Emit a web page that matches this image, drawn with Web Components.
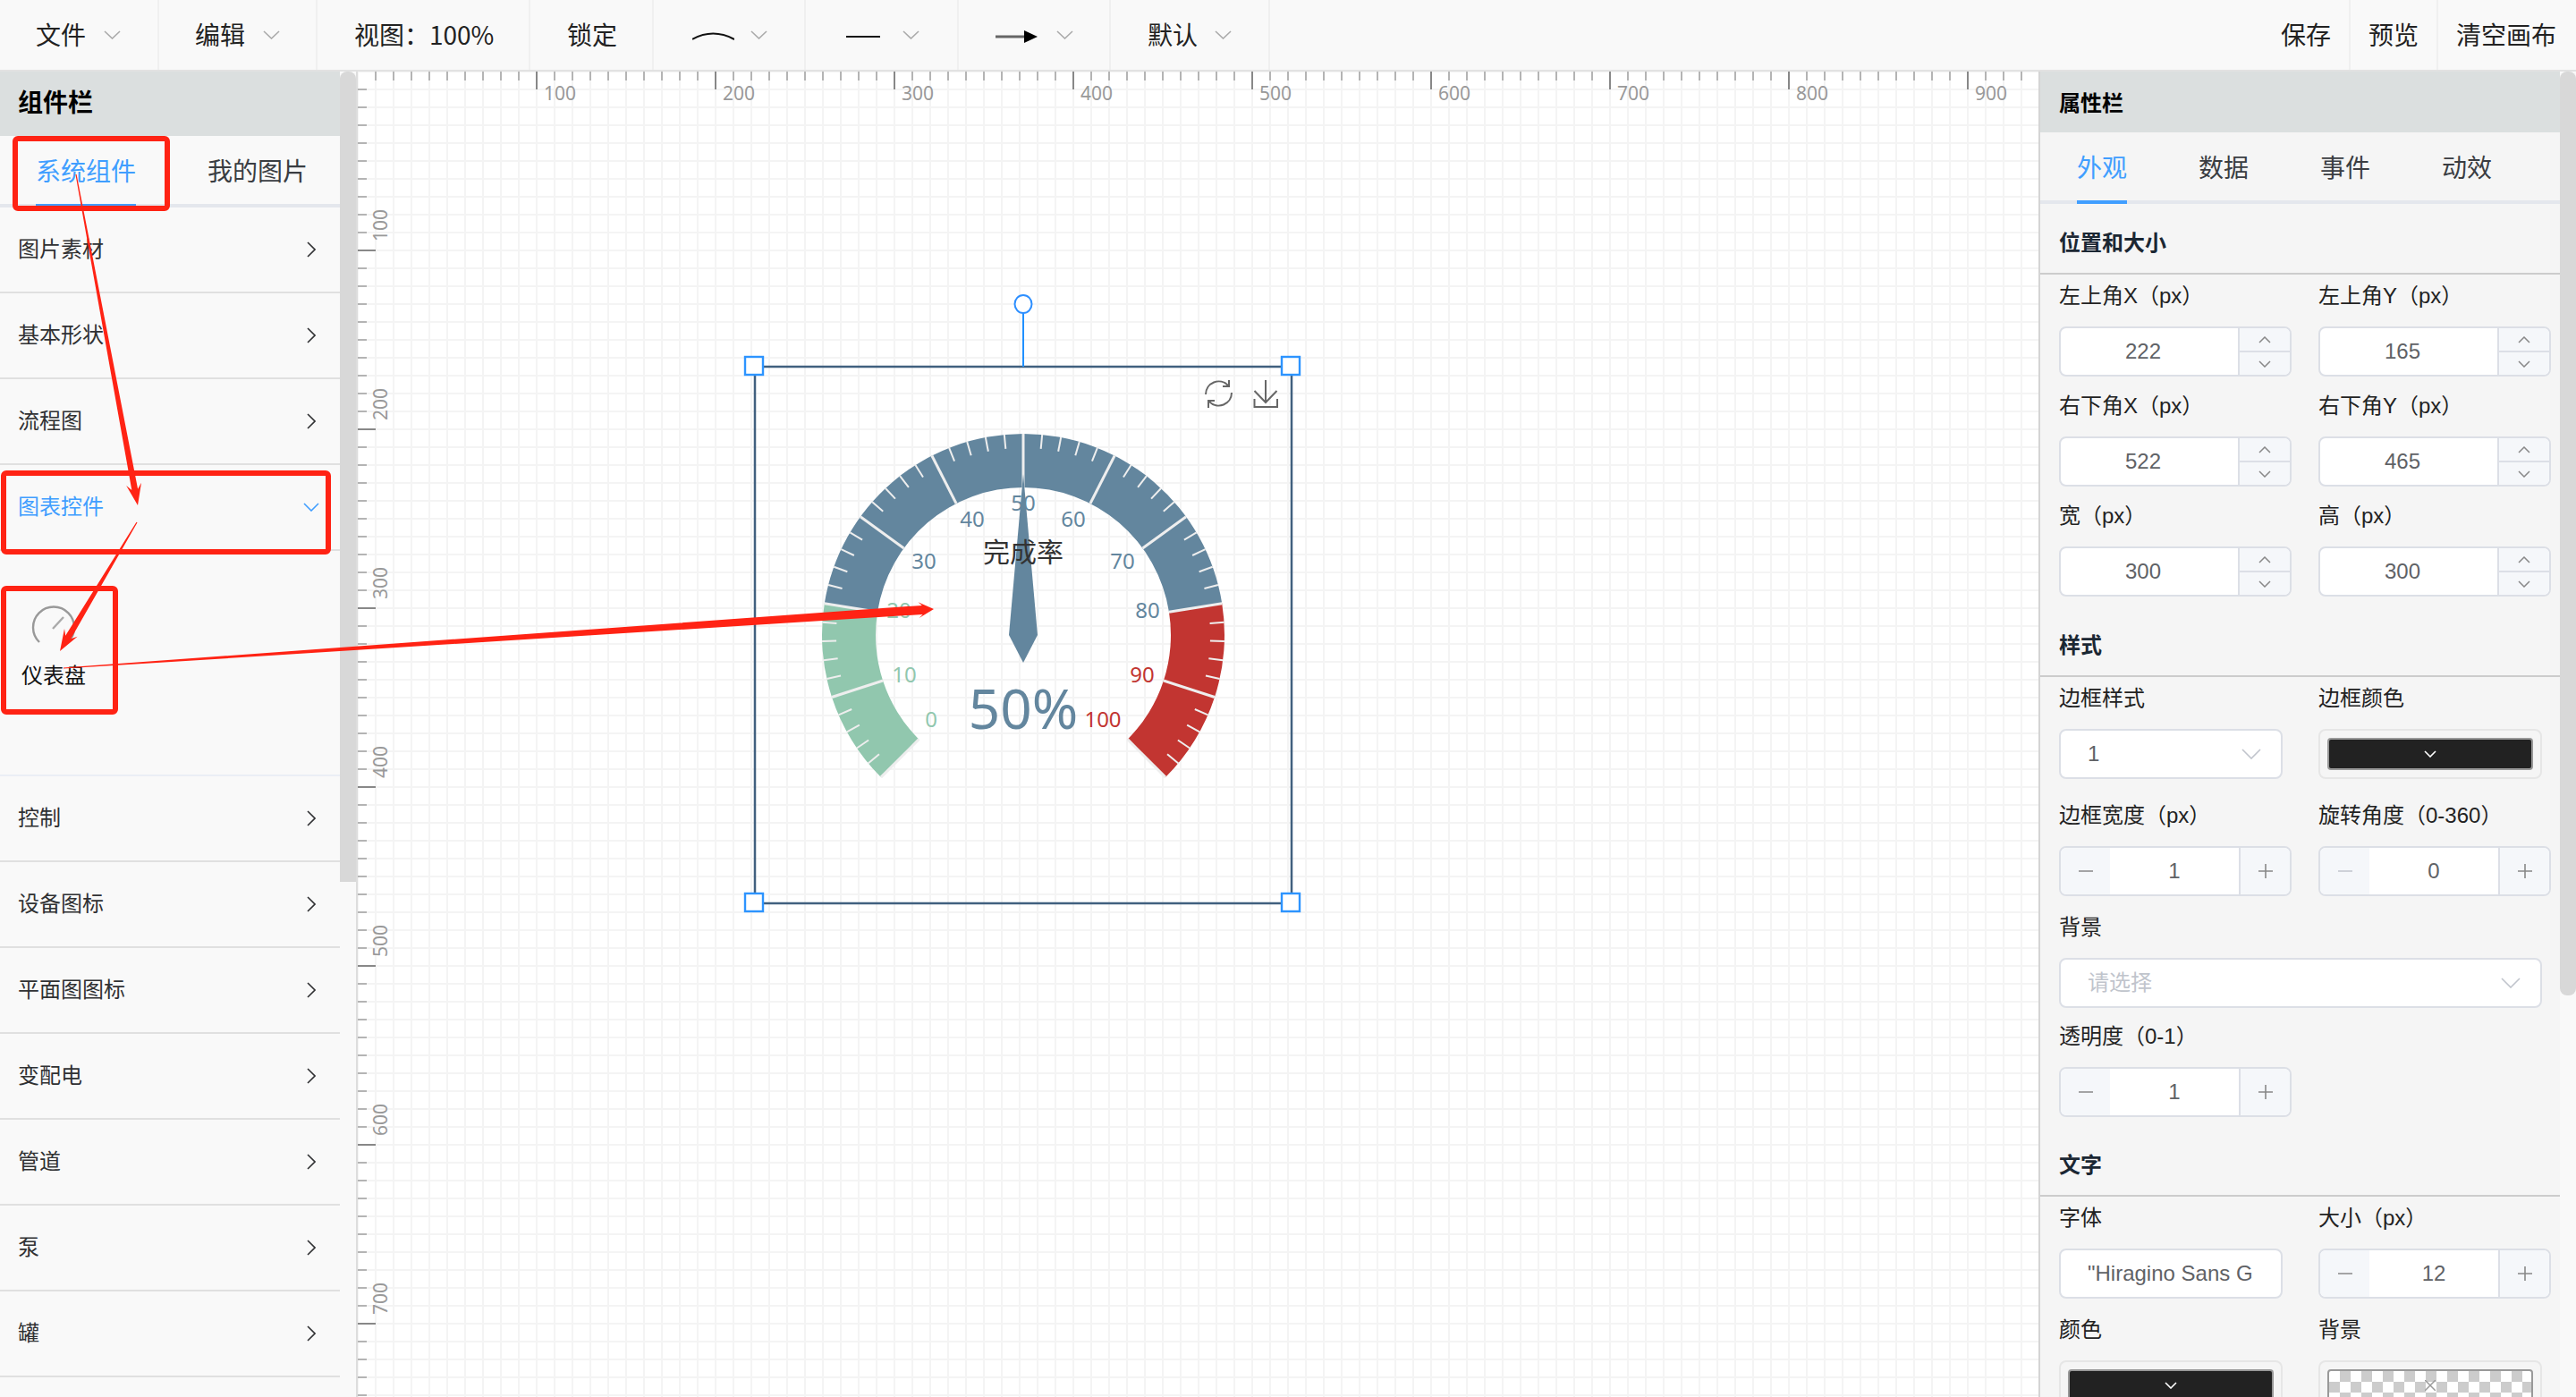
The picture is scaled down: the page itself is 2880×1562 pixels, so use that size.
<!DOCTYPE html>
<html lang="zh-CN">
<head>
<meta charset="utf-8">
<title>组态编辑器</title>
<style>
  html, body { margin: 0; height: 100%; overflow: hidden; }
  body {
    display: flex;
    flex-direction: column;
    width: 2880px;
    height: 1562px;
    position: relative;
    font: 24px "Liberation Sans", "Noto Sans CJK SC", sans-serif;
    color: #222;
    background: #fff;
  }
</style>
</head>
<body>

<top-bar>
  <tool-item style="width:178px" arrow>文件</tool-item>
  <tool-item style="width:177px" arrow>编辑</tool-item>
  <tool-item style="width:238px;padding-left:41px">视图：100%</tool-item>
  <tool-item style="width:138px;padding-left:41px">锁定</tool-item>
  <tool-item style="width:170px;padding-left:43px;--gap:18px" arrow>
    <svg width="47" height="10" viewBox="0 0 47 10" style="margin-top:4px"><path d="M0 9 Q23 -4 47 9" fill="none" stroke="#111" stroke-width="2"/></svg>
  </tool-item>
  <tool-item style="width:171px;padding-left:45px;--gap:25px" arrow>
    <svg width="38" height="10" viewBox="0 0 38 10" style="margin-top:6px"><path d="M0 5H38" stroke="#111" stroke-width="2"/></svg>
  </tool-item>
  <tool-item style="width:170px;padding-left:41px;--gap:21px" arrow>
    <svg width="47" height="14" viewBox="0 0 47 14" style="margin-top:6px"><path d="M0 7H34" stroke="#666" stroke-width="3"/><path d="M32 0L47 7L32 14Z" fill="#000"/></svg>
  </tool-item>
  <tool-item style="width:178px;padding-left:41px;--gap:19px" arrow>默认</tool-item>
  <tool-item slot="right" style="padding:0 20px">保存</tool-item>
  <tool-item slot="right" style="padding:0 20px">预览</tool-item>
  <tool-item slot="right" style="padding:0 20px;border-right:0;width:154px">清空画布</tool-item>
</top-bar>

<main-area>
  <comp-panel title="组件栏">
    <tab-bar slot="tabs">
      <tab-item active>系统组件</tab-item>
      <tab-item>我的图片</tab-item>
    </tab-bar>
    <acc-item label="图片素材"></acc-item>
    <acc-item label="基本形状"></acc-item>
    <acc-item label="流程图"></acc-item>
    <acc-item label="图表控件" open>
      <comp-tile label="仪表盘"></comp-tile>
    </acc-item>
    <acc-item label="控制"></acc-item>
    <acc-item label="设备图标"></acc-item>
    <acc-item label="平面图图标"></acc-item>
    <acc-item label="变配电"></acc-item>
    <acc-item label="管道"></acc-item>
    <acc-item label="泵"></acc-item>
    <acc-item label="罐"></acc-item>
  </comp-panel>

  <topo-canvas>
    <gauge-node></gauge-node>
  </topo-canvas>

  <prop-panel title="属性栏">
    <tab-bar slot="tabs" style="padding-left:41px">
      <tab-item active>外观</tab-item>
      <tab-item>数据</tab-item>
      <tab-item>事件</tab-item>
      <tab-item>动效</tab-item>
    </tab-bar>

    <prop-section title="位置和大小">
      <prop-row>
        <prop-field label="左上角X（px）"><spin-input value="222"></spin-input></prop-field>
        <prop-field label="左上角Y（px）"><spin-input value="165"></spin-input></prop-field>
      </prop-row>
      <prop-row style="margin-top:17px">
        <prop-field label="右下角X（px）"><spin-input value="522"></spin-input></prop-field>
        <prop-field label="右下角Y（px）"><spin-input value="465"></spin-input></prop-field>
      </prop-row>
      <prop-row style="margin-top:17px">
        <prop-field label="宽（px）"><spin-input value="300"></spin-input></prop-field>
        <prop-field label="高（px）"><spin-input value="300"></spin-input></prop-field>
      </prop-row>
    </prop-section>

    <prop-section title="样式" style="margin-top:11px">
      <prop-row>
        <prop-field label="边框样式"><select-box value="1"></select-box></prop-field>
        <prop-field label="边框颜色"><color-box color="#222"></color-box></prop-field>
      </prop-row>
      <prop-row style="margin-top:25px">
        <prop-field label="边框宽度（px）"><num-input value="1"></num-input></prop-field>
        <prop-field label="旋转角度（0-360）"><num-input value="0" min-off></num-input></prop-field>
      </prop-row>
      <prop-row style="margin-top:19px">
        <prop-field label="背景" style="grid-column:1 / 3"><select-box placeholder="请选择" style="width:540px"></select-box></prop-field>
      </prop-row>
      <prop-row style="margin-top:16px">
        <prop-field label="透明度（0-1）"><num-input value="1"></num-input></prop-field>
      </prop-row>
    </prop-section>

    <prop-section title="文字" style="margin-top:10px">
      <prop-row>
        <prop-field label="字体"><text-box value="&quot;Hiragino Sans G"></text-box></prop-field>
        <prop-field label="大小（px）"><num-input value="12"></num-input></prop-field>
      </prop-row>
      <prop-row style="margin-top:19px">
        <prop-field label="颜色"><color-box color="#222"></color-box></prop-field>
        <prop-field label="背景"><color-box empty></color-box></prop-field>
      </prop-row>
    </prop-section>
  </prop-panel>
</main-area>

<anno-marks></anno-marks>

<script>
const chevron = (dir, w, h, color, sw) => {
  const paths = {
    down: `M1 1L${w / 2} ${h - 1}L${w - 1} 1`,
    up: `M1 ${h - 1}L${w / 2} 1L${w - 1} ${h - 1}`,
    right: `M1 1L${w - 1} ${h / 2}L1 ${h - 1}`
  };
  return `<svg width="${w}" height="${h}" viewBox="0 0 ${w} ${h}" style="display:block;flex:none"><path d="${paths[dir]}" fill="none" stroke="${color}" stroke-width="${sw}"/></svg>`;
};

class TopBar extends HTMLElement {
  connectedCallback() {
    this.attachShadow({mode: 'open'}).innerHTML = `
    <style>
    :host {
      display: flex;
      flex: none;
      height: 78px;
      background: #f9f9f9;
      border-bottom: 2px solid #e2e2e2;
      justify-content: space-between;
      box-sizing: content-box;
    }
    .group { display: flex; }
    </style>
    <div class="group"><slot></slot></div>
    <div class="group"><slot name="right"></slot></div>`;
  }
}

class ToolItem extends HTMLElement {
  connectedCallback() {
    this.attachShadow({mode: 'open'}).innerHTML = `
    <style>
    :host {
      display: flex;
      align-items: center;
      gap: var(--gap, 20px);
      box-sizing: border-box;
      height: 78px;
      padding-left: 40px;
      border-right: 2px solid #f0f0f0;
      font: 28px "Noto Sans CJK SC", sans-serif;
      color: #222;
    }
    .label { display: flex; align-items: center; margin-bottom: 2px; }
    </style>
    <span class="label"><slot></slot></span>${this.hasAttribute('arrow') ? chevron('down', 19, 10, '#aaa', 1.6) : ''}`;
  }
}

class MainArea extends HTMLElement {
  connectedCallback() {
    this.attachShadow({mode: 'open'}).innerHTML = `
    <style>
    :host { display: flex; flex: 1; min-height: 0; }
    </style>
    <slot></slot>`;
  }
}

class CompPanel extends HTMLElement {
  connectedCallback() {
    this.attachShadow({mode: 'open'}).innerHTML = `
    <style>
    :host {
      display: flex;
      flex: none;
      width: 400px;
      box-sizing: border-box;
      background: #f9f9f9;
      border-right: 2px solid #ddd;
    }
    .body { width: 380px; }
    .head {
      height: 72px;
      display: flex;
      align-items: center;
      padding: 0 0 6px 20px;
      box-sizing: border-box;
      background: #dbdfdf;
      font: bold 28px "Noto Sans CJK SC", sans-serif;
      color: #000;
    }
    .thumb {
      width: 18px;
      height: 906px;
      background: #d8d8d8;
      border-radius: 8px 8px 0 0;
    }
    </style>
    <div class="body">
      <div class="head">${this.getAttribute('title')}</div>
      <slot name="tabs"></slot>
      <slot></slot>
    </div>
    <div class="thumb"></div>`;
  }
}

class TabBar extends HTMLElement {
  connectedCallback() {
    this.attachShadow({mode: 'open'}).innerHTML = `
    <style>
    :host {
      display: flex;
      gap: 80px;
      height: 76px;
      padding-left: 40px;
      border-bottom: 4px solid #e4e7ed;
    }
    </style>
    <slot></slot>`;
  }
}

class TabItem extends HTMLElement {
  connectedCallback() {
    let active = this.hasAttribute('active');
    this.attachShadow({mode: 'open'}).innerHTML = `
    <style>
    :host {
      display: block;
      height: 76px;
      font: 28px/76px "Noto Sans CJK SC", sans-serif;
      color: ${active ? '#409eff' : '#3a3d42'};
      border-bottom: 4px solid ${active ? '#409eff' : 'transparent'};
    }
    </style>
    <slot></slot>`;
  }
}

class AccItem extends HTMLElement {
  connectedCallback() {
    let open = this.hasAttribute('open');
    this.attachShadow({mode: 'open'}).innerHTML = `
    <style>
    :host { display: block; }
    .row {
      height: 94px;
      display: flex;
      align-items: center;
      justify-content: space-between;
      padding: 0 ${open ? 23 : 27}px 0 20px;
      border-bottom: 2px solid #e0e0e0;
      font: 24px "Noto Sans CJK SC", sans-serif;
      color: ${open ? '#409eff' : '#303133'};
    }
    .row span { margin-bottom: 6px; }
    .content {
      height: 250px;
      border-bottom: 2px solid #ebeef5;
    }
    </style>
    <div class="row">
      <span>${this.getAttribute('label')}</span>
      ${open ? chevron('down', 18, 10, '#409eff', 1.6) : chevron('right', 10, 18, '#303133', 1.6)}
    </div>
    ${open ? '<div class="content"><slot></slot></div>' : ''}`;
  }
}

class CompTile extends HTMLElement {
  connectedCallback() {
    this.attachShadow({mode: 'open'}).innerHTML = `
    <style>
    :host {
      display: flex;
      flex-direction: column;
      align-items: center;
      width: 120px;
      padding-top: 60px;
      font: 24px/34px "Noto Sans CJK SC", sans-serif;
      color: #111;
    }
    svg { display: block; margin-bottom: 13px; }
    </style>
    <svg width="52" height="48" viewBox="0 0 52 48">
      <path d="M10 42A23 23 0 1 1 42 42" fill="none" stroke="#999" stroke-width="2.4"/>
      <path d="M25 27L37 14" fill="none" stroke="#aaa" stroke-width="2.4"/>
    </svg>
    <span>${this.getAttribute('label')}</span>`;
  }
}

class TopoCanvas extends HTMLElement {
  connectedCallback() {
    let ticks = '', labels = '';
    for (let k = 1; k * 20 < 1880; k++) {
      let p = k * 20, major = k % 10 == 0;
      ticks += `<path d="M${p} 0V${major ? 20 : 10}" stroke="${major ? '#888' : '#b4b4b4'}" stroke-width="2"/>`;
      if (major) labels += `<text x="${p + 8}" y="32">${k * 10}</text>`;
    }
    for (let k = 1; k * 20 < 1482; k++) {
      let p = k * 20, major = k % 10 == 0;
      ticks += `<path d="M0 ${p}H${major ? 20 : 10}" stroke="${major ? '#888' : '#b4b4b4'}" stroke-width="2"/>`;
      if (major) labels += `<text transform="translate(33 ${p - 10}) rotate(-90)">${k * 10}</text>`;
    }
    this.attachShadow({mode: 'open'}).innerHTML = `
    <style>
    :host {
      display: block;
      flex: 1;
      position: relative;
      overflow: hidden;
      background-color: #fff;
      background-image:
        linear-gradient(#f4f4f4 2px, transparent 2px),
        linear-gradient(90deg, #f4f4f4 2px, transparent 2px);
      background-size: 20px 20px;
      background-position: -1px -1px;
    }
    svg.rulers { position: absolute; left: 0; top: 0; }
    text { font: 21px "Noto Sans", sans-serif; fill: #999; }
    </style>
    <svg class="rulers" width="1880" height="1482">${ticks}${labels}</svg>
    <slot></slot>`;
  }
}

class GaugeNode extends HTMLElement {
  connectedCallback() {
    const cx = 300, cy = 300;
    const pt = (p, r) => {
      let a = (225 - 270 * p) * Math.PI / 180;
      return [(cx + r * Math.cos(a)).toFixed(2), (cy - r * Math.sin(a)).toFixed(2)];
    };
    const band = (from, to, color) => {
      let a = pt(from, 225), b = pt(to, 225), c = pt(to, 165), d = pt(from, 165);
      let big = (to - from) * 270 > 180 ? 1 : 0;
      return `<path d="M${a}A225 225 0 ${big} 1 ${b}L${c}A165 165 0 ${big} 0 ${d}Z" fill="${color}"/>`;
    };
    let gauge = band(0, 0.2, '#91c7ae') + band(0.2, 0.8, '#63869e') + band(0.8, 1, '#c23531');
    for (let i = 0; i <= 50; i++) {
      let p = i / 50;
      if (i % 5 == 0) {
        gauge += `<path d="M${pt(p, 225)}L${pt(p, 165)}" stroke="#eee" stroke-width="3"/>`;
      } else {
        gauge += `<path d="M${pt(p, 225)}L${pt(p, 209)}" stroke="#eee" stroke-width="2"/>`;
      }
    }
    const scale = [
      [0, 197, 393, '#91c7ae'], [10, 167, 343, '#91c7ae'], [20, 161, 271, '#91c7ae'],
      [30, 189, 216, '#63869e'], [40, 243, 169, '#63869e'], [50, 300, 151, '#63869e'],
      [60, 356, 169, '#63869e'], [70, 411, 216, '#63869e'], [80, 439, 271, '#63869e'],
      [90, 433, 343, '#c23531'], [100, 389, 393, '#c23531']
    ];
    let texts = scale.map(s => `<text class="num" x="${s[1]}" y="${s[2]}" fill="${s[3]}">${s[0]}</text>`).join('');
    this.attachShadow({mode: 'open'}).innerHTML = `
    <style>
    :host {
      display: block;
      position: absolute;
      left: 444px;
      top: 330px;
      width: 600px;
      height: 600px;
    }
    svg { display: block; overflow: visible; }
    text { text-anchor: middle; dominant-baseline: central; }
    .num { font: 24px "Noto Sans", sans-serif; }
    .title { font: 30px "Noto Sans CJK SC", sans-serif; fill: #333; }
    .detail { font: 62px "Noto Sans", sans-serif; fill: #63869e; }
    </style>
    <svg width="600" height="600" viewBox="0 0 600 600">
      ${gauge}
      <path d="M300 120L316 300L300 331L284 300Z" fill="#63869e"/>
      ${texts}
      <text class="title" x="300" y="205">完成率</text>
      <text class="detail" x="300" y="381">50%</text>

      <rect x="0" y="0" width="600" height="600" fill="none" stroke="#41607f" stroke-width="2.5"/>
      <path d="M300 -60V0" stroke="#2090ff" stroke-width="2"/>
      <ellipse cx="300" cy="-70" rx="9.5" ry="10" fill="#fff" stroke="#2d8fff" stroke-width="2"/>
      <g fill="#fff" stroke="#2d94ff" stroke-width="2.4">
        <rect x="-11" y="-11" width="20" height="20"/>
        <rect x="589" y="-11" width="20" height="20"/>
        <rect x="-11" y="589" width="20" height="20"/>
        <rect x="589" y="589" width="20" height="20"/>
      </g>

      <g transform="translate(502 14)" fill="none" stroke="#666" stroke-width="2">
        <path d="M2 17A14.5 14.5 0 0 1 27 7"/>
        <path d="M28 1V8H21"/>
        <path d="M31 15A14.5 14.5 0 0 1 6 25"/>
        <path d="M5 32V24H12"/>
      </g>
      <g transform="translate(557.5 15)" fill="none" stroke="#666" stroke-width="2">
        <path d="M13.5 0V25"/>
        <path d="M1 12L13.5 25L26 12"/>
        <path d="M1 21V30H26.5V21"/>
      </g>
    </svg>`;
  }
}

class PropPanel extends HTMLElement {
  connectedCallback() {
    this.attachShadow({mode: 'open'}).innerHTML = `
    <style>
    :host {
      display: flex;
      flex: none;
      width: 601px;
      box-sizing: border-box;
      border-left: 2px solid #d4d4d4;
      background: #f9f9f9;
    }
    .body { width: 581px; background: #f5f5f5; height: 100%; }
    .head {
      height: 66px;
      display: flex;
      align-items: center;
      padding: 0 0 2px 21px;
      background: #dbdfdf;
      font: bold 24px "Noto Sans CJK SC", sans-serif;
      color: #000;
    }
    .thumb {
      width: 18px;
      height: 1033px;
      background: #d8d8d8;
      border-radius: 8px;
    }
    </style>
    <div class="body">
      <div class="head">${this.getAttribute('title')}</div>
      <slot name="tabs"></slot>
      <slot></slot>
    </div>
    <div class="thumb"></div>`;
  }
}

class PropSection extends HTMLElement {
  connectedCallback() {
    this.attachShadow({mode: 'open'}).innerHTML = `
    <style>
    :host { display: block; }
    .title {
      padding: 25px 0 18px 21px;
      font: bold 24px/34px "Noto Sans CJK SC", sans-serif;
      color: #1b2733;
      border-bottom: 2px solid #ccc;
    }
    .rows { padding: 8px 0 0 21px; }
    </style>
    <div class="title">${this.getAttribute('title')}</div>
    <div class="rows"><slot></slot></div>`;
  }
}

class PropRow extends HTMLElement {
  connectedCallback() {
    this.attachShadow({mode: 'open'}).innerHTML = `
    <style>
    :host { display: grid; grid-template-columns: 290px 290px; }
    </style>
    <slot></slot>`;
  }
}

class PropField extends HTMLElement {
  connectedCallback() {
    this.attachShadow({mode: 'open'}).innerHTML = `
    <style>
    :host { display: block; }
    label {
      display: block;
      margin-bottom: 18px;
      font: 24px/32px "Liberation Sans", "Noto Sans CJK SC", sans-serif;
      color: #222;
    }
    </style>
    <label>${this.getAttribute('label')}</label>
    <slot></slot>`;
  }
}

const boxStyle = `
  box-sizing: border-box;
  height: 56px;
  background: #fff;
  border: 2px solid #dcdfe6;
  border-radius: 8px;
  overflow: hidden;
  font: 24px "Liberation Sans", "Noto Sans CJK SC", sans-serif;
  color: #606266;
`;

class SpinInput extends HTMLElement {
  connectedCallback() {
    this.attachShadow({mode: 'open'}).innerHTML = `
    <style>
    :host { display: flex; width: 260px; ${boxStyle} }
    .val { flex: 1; display: flex; align-items: center; justify-content: center; padding-right: 14px; }
    .btns { width: 56px; display: flex; flex-direction: column; border-left: 2px solid #dcdfe6; }
    .btns div { flex: 1; display: flex; align-items: center; justify-content: center; background: #f5f7fa; }
    .btns div + div { border-top: 2px solid #dcdfe6; }
    </style>
    <div class="val">${this.getAttribute('value')}</div>
    <div class="btns">
      <div>${chevron('up', 14, 8, '#888', 1.5)}</div>
      <div>${chevron('down', 14, 8, '#888', 1.5)}</div>
    </div>`;
  }
}

class NumInput extends HTMLElement {
  connectedCallback() {
    let minus = this.hasAttribute('min-off') ? '#c0c4cc' : '#888';
    this.attachShadow({mode: 'open'}).innerHTML = `
    <style>
    :host { display: flex; width: 260px; ${boxStyle} }
    .val { flex: 1; display: flex; align-items: center; justify-content: center; }
    .btn {
      width: 55px;
      display: flex;
      align-items: center;
      justify-content: center;
      background: #f5f7fa;
    }
    .btn:first-child { border-right: 2px solid #dcdfe6; }
    .btn:last-child { border-left: 2px solid #dcdfe6; }
    svg { display: block; }
    </style>
    <div class="btn"><svg width="16" height="16"><path d="M0 8H16" stroke="${minus}" stroke-width="1.6"/></svg></div>
    <div class="val">${this.getAttribute('value')}</div>
    <div class="btn"><svg width="16" height="16"><path d="M0 8H16M8 0V16" stroke="#888" stroke-width="1.6"/></svg></div>`;
  }
}

class SelectBox extends HTMLElement {
  connectedCallback() {
    let ph = this.getAttribute('placeholder');
    this.attachShadow({mode: 'open'}).innerHTML = `
    <style>
    :host {
      display: flex;
      align-items: center;
      justify-content: space-between;
      width: 250px;
      padding: 0 22px 0 30px;
      ${boxStyle}
    }
    span {
      color: ${ph ? '#c0c4cc' : '#606266'};
      font-family: ${ph ? '"Noto Sans CJK SC"' : '"Liberation Sans"'}, sans-serif;
      margin-bottom: ${ph ? 6 : 0}px;
    }
    </style>
    <span>${ph || this.getAttribute('value')}</span>
    ${chevron('down', 22, 12, '#c0c4cc', 1.6)}`;
  }
}

class TextBox extends HTMLElement {
  connectedCallback() {
    this.attachShadow({mode: 'open'}).innerHTML = `
    <style>
    :host {
      display: flex;
      align-items: center;
      width: 250px;
      padding-left: 30px;
      ${boxStyle}
    }
    </style>
    <span></span>`;
    this.shadowRoot.querySelector('span').textContent = this.getAttribute('value');
  }
}

class ColorBox extends HTMLElement {
  connectedCallback() {
    let empty = this.hasAttribute('empty');
    let fill = empty
      ? 'background: conic-gradient(#ccc 25%, #fff 0 50%, #ccc 0 75%, #fff 0) 0 0 / 24px 24px;'
      : `background: ${this.getAttribute('color')};`;
    let mark = empty
      ? '<svg width="12" height="12"><path d="M0 0L12 12M12 0L0 12" stroke="#999" stroke-width="1.5"/></svg>'
      : chevron('down', 14, 8, '#fff', 1.6);
    this.attachShadow({mode: 'open'}).innerHTML = `
    <style>
    :host {
      display: flex;
      width: 250px;
      padding: 8px;
      ${boxStyle}
      background: transparent;
      border-color: #e6e6e6;
    }
    .swatch {
      flex: 1;
      display: flex;
      align-items: center;
      justify-content: center;
      border: 2px solid #999;
      border-radius: 4px;
      ${fill}
    }
    </style>
    <div class="swatch">${mark}</div>`;
  }
}

class AnnoMarks extends HTMLElement {
  connectedCallback() {
    // tapered callout arrow: thin at the tail, barbed head at the tip
    const arrow = (x0, y0, x1, y1, neck, headW, headL) => {
      let len = Math.hypot(x1 - x0, y1 - y0);
      let dx = (x1 - x0) / len, dy = (y1 - y0) / len, nx = -dy, ny = dx;
      let at = (d, off) => `${(x1 - dx * d + nx * off).toFixed(1)},${(y1 - dy * d + ny * off).toFixed(1)}`;
      return `<polygon points="${x0 + nx * 0.6},${y0 + ny * 0.6} ${at(headL * 0.75, neck / 2)} ${at(headL, headW / 2)} ${x1},${y1} ${at(headL, -headW / 2)} ${at(headL * 0.75, -neck / 2)} ${x0 - nx * 0.6},${y0 - ny * 0.6}"/>`;
    };
    this.attachShadow({mode: 'open'}).innerHTML = `
    <style>
    :host { display: block; position: absolute; left: 0; top: 0; pointer-events: none; }
    svg { display: block; }
    </style>
    <svg width="2880" height="1562" viewBox="0 0 2880 1562">
      <g fill="none" stroke="#ff2314" stroke-width="6">
        <rect x="17" y="155" width="170" height="78" rx="3"/>
        <rect x="4" y="529" width="363" height="88" rx="3"/>
        <rect x="4" y="658" width="125" height="138" rx="3"/>
      </g>
      <g fill="#ff2314">
        ${arrow(85, 195, 154, 565, 7, 17, 24)}
        ${arrow(153, 584, 67, 728, 7, 17, 24)}
        ${arrow(71, 747, 1044, 681, 10, 18, 17)}
      </g>
    </svg>`;
  }
}

customElements.define('top-bar', TopBar);
customElements.define('tool-item', ToolItem);
customElements.define('main-area', MainArea);
customElements.define('comp-panel', CompPanel);
customElements.define('tab-bar', TabBar);
customElements.define('tab-item', TabItem);
customElements.define('acc-item', AccItem);
customElements.define('comp-tile', CompTile);
customElements.define('topo-canvas', TopoCanvas);
customElements.define('gauge-node', GaugeNode);
customElements.define('prop-panel', PropPanel);
customElements.define('prop-section', PropSection);
customElements.define('prop-row', PropRow);
customElements.define('prop-field', PropField);
customElements.define('spin-input', SpinInput);
customElements.define('num-input', NumInput);
customElements.define('select-box', SelectBox);
customElements.define('text-box', TextBox);
customElements.define('color-box', ColorBox);
customElements.define('anno-marks', AnnoMarks);
</script>
</body>
</html>
